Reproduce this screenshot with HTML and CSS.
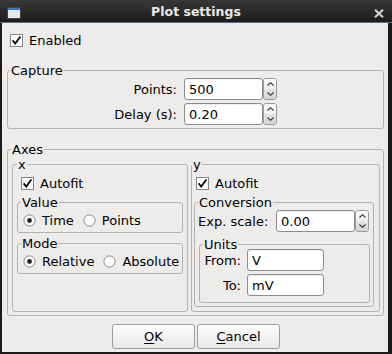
FILE: index.html
```html
<!DOCTYPE html>
<html>
<head>
<meta charset="utf-8">
<title>Plot settings</title>
<link rel="stylesheet" href="styles.css">
</head>
<body>
<div class="titlebar">
  <svg class="winicon" width="14" height="13" viewBox="0 0 14 13"><rect x="0.5" y="0.5" width="13" height="11" fill="#e4e7eb" stroke="#444"/><rect x="1" y="1" width="12" height="2" fill="#3f74c4"/></svg>
  <span class="title">Plot settings</span>
  <svg class="close" width="10" height="9" viewBox="0 0 10 9"><path d="M1 0.8 L9 8.2 M9 0.8 L1 8.2" stroke="#cfcfcf" stroke-width="2.2" fill="none"/></svg>
</div>
<div class="content">
  <label class="check enabled"><svg class="cb" width="13" height="13" viewBox="0 0 13 13"><rect x="0.5" y="0.5" width="12" height="12" fill="#fff" stroke="#858585"/><path d="M2.6 6.4 L5.2 9.6 L10.4 2.6" stroke="#000" stroke-width="1.7" fill="none"/></svg>Enabled</label>

  <fieldset class="gb capture">
    <legend class="lg-cap">Capture</legend>
    <div class="form">
      <span class="lbl">Points:</span>
      <div class="spin"><div class="field">500</div><div class="spin-btn"><div class="up"><svg width="7" height="4" viewBox="0 0 7 4"><path d="M0.5 3.5 L3.5 0.7 L6.5 3.5" stroke="#333" stroke-width="1.1" fill="none"/></svg></div><div class="down"><svg width="7" height="4" viewBox="0 0 7 4"><path d="M0.5 0.5 L3.5 3.3 L6.5 0.5" stroke="#333" stroke-width="1.1" fill="none"/></svg></div></div></div>
      <span class="lbl">Delay (s):</span>
      <div class="spin"><div class="field">0.20</div><div class="spin-btn"><div class="up"><svg width="7" height="4" viewBox="0 0 7 4"><path d="M0.5 3.5 L3.5 0.7 L6.5 3.5" stroke="#333" stroke-width="1.1" fill="none"/></svg></div><div class="down"><svg width="7" height="4" viewBox="0 0 7 4"><path d="M0.5 0.5 L3.5 3.3 L6.5 0.5" stroke="#333" stroke-width="1.1" fill="none"/></svg></div></div></div>
    </div>
  </fieldset>

  <fieldset class="gb axes">
    <legend>Axes</legend>
    <div class="axes-body">
      <fieldset class="gb xgroup">
        <legend class="lg-x">x</legend>
        <div class="x-body">
          <label class="check autofit"><svg class="cb" width="13" height="13" viewBox="0 0 13 13"><rect x="0.5" y="0.5" width="12" height="12" fill="#fff" stroke="#858585"/><path d="M2.6 6.4 L5.2 9.6 L10.4 2.6" stroke="#000" stroke-width="1.7" fill="none"/></svg>Autofit</label>
          <fieldset class="gb value">
            <legend>Value</legend>
            <div class="radios">
              <label class="radio"><svg width="13" height="13" viewBox="0 0 13 13"><circle cx="6.5" cy="6.5" r="5.6" fill="#fbfbfb" stroke="#888"/><circle cx="6.5" cy="6.5" r="2.4" fill="#222"/></svg>Time</label>
              <label class="radio"><svg width="13" height="13" viewBox="0 0 13 13"><circle cx="6.5" cy="6.5" r="5.6" fill="#fbfbfb" stroke="#888"/></svg>Points</label>
            </div>
          </fieldset>
          <fieldset class="gb mode">
            <legend>Mode</legend>
            <div class="radios">
              <label class="radio"><svg width="13" height="13" viewBox="0 0 13 13"><circle cx="6.5" cy="6.5" r="5.6" fill="#fbfbfb" stroke="#888"/><circle cx="6.5" cy="6.5" r="2.4" fill="#222"/></svg>Relative</label>
              <label class="radio"><svg width="13" height="13" viewBox="0 0 13 13"><circle cx="6.5" cy="6.5" r="5.6" fill="#fbfbfb" stroke="#888"/></svg>Absolute</label>
            </div>
          </fieldset>
        </div>
      </fieldset>

      <fieldset class="gb ygroup">
        <legend class="lg-y">y</legend>
        <div class="y-body">
          <label class="check autofit-y"><svg class="cb" width="13" height="13" viewBox="0 0 13 13"><rect x="0.5" y="0.5" width="12" height="12" fill="#fff" stroke="#858585"/><path d="M2.6 6.4 L5.2 9.6 L10.4 2.6" stroke="#000" stroke-width="1.7" fill="none"/></svg>Autofit</label>
          <fieldset class="gb conversion">
            <legend>Conversion</legend>
            <div class="conv-body">
              <div class="exp-row">
                <span class="exp-lbl">Exp. scale:</span>
                <div class="spin"><div class="field">0.00</div><div class="spin-btn"><div class="up"><svg width="7" height="4" viewBox="0 0 7 4"><path d="M0.5 3.5 L3.5 0.7 L6.5 3.5" stroke="#333" stroke-width="1.1" fill="none"/></svg></div><div class="down"><svg width="7" height="4" viewBox="0 0 7 4"><path d="M0.5 0.5 L3.5 3.3 L6.5 0.5" stroke="#333" stroke-width="1.1" fill="none"/></svg></div></div></div>
              </div>
              <fieldset class="gb units">
                <legend>Units</legend>
                <div class="units-form">
                  <span class="lbl">From:</span>
                  <div class="field line">V</div>
                  <span class="lbl">To:</span>
                  <div class="field line">mV</div>
                </div>
              </fieldset>
            </div>
          </fieldset>
        </div>
      </fieldset>
    </div>
  </fieldset>

  <div class="buttons">
    <button class="btn"><u>O</u>K</button>
    <button class="btn"><u>C</u>ancel</button>
  </div>
</div>
</body>
</html>
```

FILE: styles.css
```css
* { box-sizing: border-box; }
html, body { margin: 0; padding: 0; }
body {
  width: 392px;
  height: 354px;
  overflow: hidden;
  background: #1b1b1b;
  font-family: "DejaVu Sans", sans-serif;
  font-size: 13px;
  color: #000;
}

/* title bar */
.titlebar {
  height: 23px;
  display: grid;
  grid-template-columns: 1fr auto 1fr;
  grid-template-rows: 22px;
  align-items: start;
  background: linear-gradient(#383838, #1c1c1c);
  border-bottom: 1px solid #51719b;
}
.winicon { margin: 7px 0 0 7px; display: block; }
.title {
  font-weight: bold;
  font-size: 12.5px;
  line-height: 22px;
  padding-top: 1px;
  color: #e8e8e8;
}
.close { justify-self: end; margin: 9px 8px 0 0; display: block; }

/* content */
.content {
  margin: 0 4px 0 2px;
  background: #edecea;
  padding: 9px 0 3px;
  display: flex;
  flex-direction: column;
  align-items: flex-start;
}

.check {
  display: flex;
  align-items: center;
  gap: 6px;
  height: 16px;
  white-space: nowrap;
}
.check svg, .radio svg { display: block; flex: none; }
.enabled { margin-left: 8px; }

/* group boxes */
.gb {
  border: 1px solid #b4b2ae;
  border-radius: 3px;
  margin: 0;
  padding: 0;
  min-width: 0;
}
.gb > legend {
  padding: 0 1px;
  margin-left: 3px;
  line-height: 15px;
  white-space: nowrap;
}
.gb > legend.lg-cap { margin-left: 2px; }
.gb > legend.lg-x { margin-left: 4px; }
.gb > legend.lg-y { margin-left: 0; }

.capture {
  margin-top: 15px;
  margin-left: 5px;
  width: 377px;
}
.form {
  display: grid;
  grid-template-columns: 169px auto;
  column-gap: 7px;
  row-gap: 3px;
  align-items: center;
  justify-content: start;
  padding-bottom: 3px;
}
.lbl { text-align: right; white-space: nowrap; }

.field {
  height: 22px;
  background: #fff;
  border: 1px solid #8c8c8c;
  border-radius: 3px;
  box-shadow: inset 0 1px 1px rgba(0,0,0,0.07);
  padding-left: 4px;
  display: flex;
  align-items: center;
  white-space: nowrap;
}
.spin { display: flex; }
.spin .field { width: 79px; }
.spin-btn {
  width: 14px;
  height: 22px;
  border: 1px solid #9a9a9a;
  border-radius: 3px;
  display: flex;
  flex-direction: column;
  overflow: hidden;
}
.spin-btn .up, .spin-btn .down {
  flex: 1;
  display: flex;
  align-items: center;
  justify-content: center;
}
.spin-btn .up { background: linear-gradient(#fdfdfd, #eeeeee); }
.spin-btn .down { background: linear-gradient(#e4e4e4, #d6d6d6); }
.spin-btn svg { display: block; }

/* axes */
.axes {
  margin-top: 13px;
  margin-left: 5px;
  width: 377px;
}
.axes-body {
  display: grid;
  grid-template-columns: 176px 189px;
  column-gap: 3px;
  padding: 0 3px 3px 4px;
}
.x-body { padding: 3px 4px 0 4px; }
.autofit { margin-left: 4px; }
.value { margin-top: 4px; }
.mode { margin-top: 3px; }
.radios {
  display: flex;
  gap: 9px;
  padding: 2px 0 4px 5px;
}
.radio {
  display: flex;
  align-items: center;
  gap: 6px;
  height: 16px;
  white-space: nowrap;
}

.y-body { padding: 3px 5px 4px 2px; }
.autofit-y { margin-left: 2px; }
.conversion { margin-top: 4px; }
.conv-body { padding: 0 3px 3px 0; }
.exp-row {
  display: flex;
  align-items: center;
  margin-left: 3px;
}
.exp-lbl { width: 78px; flex: none; white-space: nowrap; }
.units {
  margin-top: 5px;
  margin-left: 4px;
  width: 171px;
}
.units-form {
  display: grid;
  grid-template-columns: 38px 77px;
  column-gap: 6px;
  row-gap: 3px;
  align-items: center;
  margin-top: -3px;
  padding: 0 0 6px 3px;
}
.field.line { width: 77px; }

/* buttons */
.buttons {
  align-self: stretch;
  display: flex;
  justify-content: center;
  gap: 2px;
  margin-top: 8px;
  padding-left: 2px;
}
.btn {
  width: 83px;
  height: 25px;
  margin: 0;
  padding: 0;
  border: 1px solid #9d9d9d;
  border-radius: 3px;
  background: linear-gradient(#fdfdfd, #e8e8e8);
  font-family: "DejaVu Sans", sans-serif;
  font-size: 13px;
  color: #000;
}
.btn u { text-decoration-thickness: 1px; text-underline-offset: 2px; }
```
